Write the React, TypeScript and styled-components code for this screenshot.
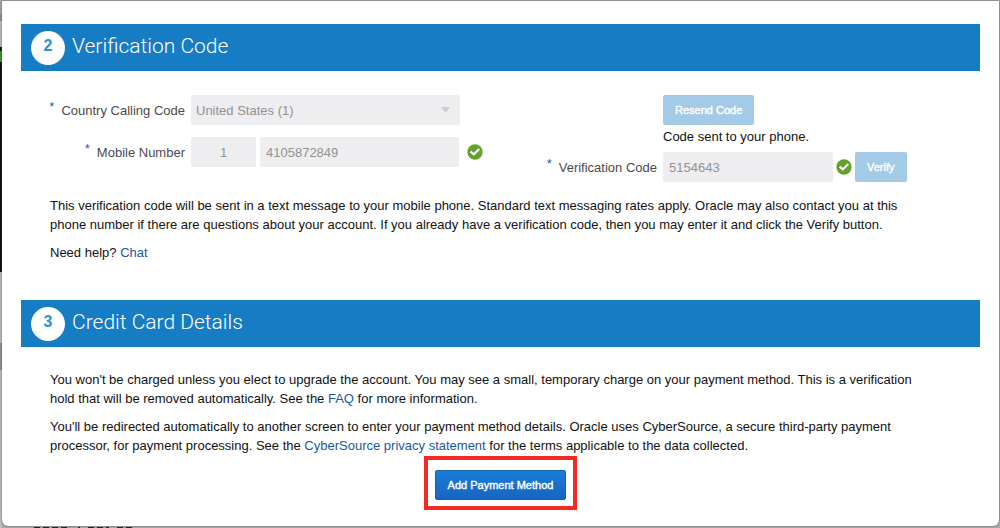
import React from "react";
import styled, { createGlobalStyle } from "styled-components";

const Global = createGlobalStyle`
  * { box-sizing: border-box; }
  body {
    margin: 0;
    background: #bdbdbd;
    font-family: "Liberation Sans", Arial, sans-serif;
    font-size: 13px;
    line-height: 19px;
    color: #111;
  }
  button, input, select { font: inherit; margin: 0; }
`;

const Backdrop = styled.div`
  min-height: 100vh;
  display: flex;
  flex-direction: column;
  padding: 1px 1px 0 2px;
  background: #a9a9a9 0 0 / 2px 100% no-repeat
    linear-gradient(
      to bottom,
      #a3a3a3 0 14px,
      #8e8e8e 14px 21px,
      #bcbcbc 21px 47px,
      #111 47px 51px,
      #2c9a1f 51px 62px,
      #0c0c0c 62px 272px,
      #bdbdbd 272px 343px,
      #8d8d8d 343px 370px,
      #bdbdbd 370px
    );
`;

const Dialog = styled.main`
  padding: 23px 19px 16px;
  background: #fff;
  border-radius: 0 0 6px 6px;
  box-shadow: 0 0 2px #444;
`;

const Behind = styled.div`
  height: 2px;
  padding: 1px 0 0 32px;
  display: flex;
  gap: 8px;
`;

const Fragment = styled.span<{ $width: number }>`
  width: ${(p) => p.$width}px;
  height: 1px;
  background: repeating-linear-gradient(to right, #222 0 6px, #999 6px 9px);
`;

const Banner = styled.header`
  display: flex;
  align-items: center;
  gap: 7px;
  height: 47px;
  padding-left: 10px;
  background: #167cc4;
`;

const Step = styled.span`
  display: flex;
  align-items: center;
  justify-content: center;
  width: 34px;
  height: 34px;
  padding-bottom: 4px;
  border-radius: 50%;
  background: #fff;
  color: #2493cf;
  font-size: 16px;
  font-weight: 700;
`;

const Title = styled.h2`
  margin: 0;
  padding-bottom: 4px;
  color: #fff;
  font-family: Roboto, "Liberation Sans", sans-serif;
  font-size: 21px;
  font-weight: 300;
  line-height: 28px;
`;

const Form = styled.form`
  display: flex;
  padding: 24px 0 0 19px;
`;

const Fields = styled.div<{ $label: number }>`
  display: grid;
  grid-template-columns: ${(p) => p.$label}px auto;
  column-gap: 6px;
  align-content: start;
`;

const PhoneFields = styled(Fields)`
  row-gap: 12px;
  width: 482px;
`;

const Label = styled.label`
  justify-self: end;
  align-self: center;
  color: #4a4a4a;
`;

const Required = styled.span`
  margin-right: 7px;
  color: #1c5fb0;
  line-height: 0;
  vertical-align: 4px;
`;

const Controls = styled.div<{ $gap: number }>`
  display: flex;
  align-items: center;
  gap: ${(p) => p.$gap}px;
`;

const Input = styled.input<{ $width: number; $center?: boolean }>`
  width: ${(p) => p.$width}px;
  height: 30px;
  padding: 0 6px;
  border: 0;
  border-radius: 2px;
  background: #eeeef0;
  color: #929292;
  text-align: ${(p) => (p.$center ? "center" : "left")};
`;

const SelectWrap = styled.div`
  display: grid;
  width: 269px;
  > * { grid-area: 1 / 1; }
  > svg { justify-self: end; align-self: center; margin-right: 10px; }
`;

const Select = styled.select`
  appearance: none;
  height: 30px;
  padding: 0 5px;
  border: 0;
  border-radius: 2px;
  background: #eeeef0;
  color: #929292;
  opacity: 1;
`;

const Button = styled.button<{ $primary?: boolean }>`
  height: 30px;
  padding: 0 12px;
  border: ${(p) => (p.$primary ? "1px solid #1560ad" : "0")};
  border-radius: 2px;
  background: ${(p) => (p.$primary ? "linear-gradient(#1a7bdb, #1666c0)" : "#a3cae6")};
  color: #fff;
  font-size: 11px;
  -webkit-text-stroke: 0.4px #fff;
`;

const Status = styled.p`
  grid-column: 2;
  margin: 0;
  padding: 2px 0 6px;
`;

const Copy = styled.div`
  display: flex;
  flex-direction: column;
  gap: 9px;
  max-width: 902px;
  padding: 14px 0 38px 29px;
  p { margin: 0; }
`;

const CardCopy = styled(Copy)`
  padding: 23px 0 1px 29px;
`;

const Link = styled.a`
  color: #1a56a5;
  text-decoration: none;
`;

const Highlight = styled.div`
  width: fit-content;
  margin: 0 auto;
  padding: 10px 7px 6px;
  border: 4px solid #f32a23;
  display: flex;
`;

const Resend = styled.div`
  grid-column: 2;
  display: flex;
`;

function Check() {
  return (
    <svg width="16" height="16" viewBox="0 0 16 16" role="img" aria-label="Valid">
      <circle cx="8" cy="8" r="7.7" fill="#65a22b" />
      <path d="M3.6 7.6 6.8 10.4 12.2 5" fill="none" stroke="#fff" strokeWidth="2.1" />
    </svg>
  );
}

function Section({ step, title, children }: { step: number; title: string; children: React.ReactNode }) {
  return (
    <section>
      <Banner>
        <Step>{step}</Step>
        <Title>{title}</Title>
      </Banner>
      {children}
    </section>
  );
}

export default function App() {
  return (
    <Backdrop>
      <Global />
      <Dialog>
        <Section step={2} title="Verification Code">
          <Form>
            <PhoneFields $label={145}>
              <Label htmlFor="country"><Required>*</Required>Country Calling Code</Label>
              <SelectWrap>
                <Select id="country" disabled><option>United States (1)</option></Select>
                <svg width="9" height="6" viewBox="0 0 9 6" aria-hidden="true"><path d="M0 0h9L4.5 6z" fill="#cfcfd1" /></svg>
              </SelectWrap>
              <Label htmlFor="mobile"><Required>*</Required>Mobile Number</Label>
              <Controls $gap={8}>
                <Controls $gap={4}>
                  <Input $width={65} $center aria-label="Calling code" defaultValue="1" disabled />
                  <Input $width={199} id="mobile" defaultValue="4105872849" disabled />
                </Controls>
                <Check />
              </Controls>
            </PhoneFields>
            <Fields $label={135}>
              <Resend><Button type="button" disabled>Resend Code</Button></Resend>
              <Status>Code sent to your phone.</Status>
              <Label htmlFor="code"><Required>*</Required>Verification Code</Label>
              <Controls $gap={3}>
                <Input $width={170} id="code" defaultValue="5154643" disabled />
                <Check />
                <Button type="button" disabled>Verify</Button>
              </Controls>
            </Fields>
          </Form>
          <Copy>
            <p>
              This verification code will be sent in a text message to your mobile phone. Standard text messaging rates apply. Oracle may also contact you at this
              phone number if there are questions about your account. If you already have a verification code, then you may enter it and click the Verify button.
            </p>
            <p>Need help? <Link href="#chat">Chat</Link></p>
          </Copy>
        </Section>
        <Section step={3} title="Credit Card Details">
          <CardCopy>
            <p>
              You won't be charged unless you elect to upgrade the account. You may see a small, temporary charge on your payment method. This is a verification
              hold that will be removed automatically. See the <Link href="#faq">FAQ</Link> for more information.
            </p>
            <p>
              You'll be redirected automatically to another screen to enter your payment method details. Oracle uses CyberSource, a secure third-party payment
              processor, for payment processing. See the <Link href="#privacy">CyberSource privacy statement</Link> for the terms applicable to the data collected.
            </p>
          </CardCopy>
          <Highlight><Button $primary type="button">Add Payment Method</Button></Highlight>
        </Section>
      </Dialog>
      <Behind aria-hidden="true">
        <Fragment $width={36} />
        <Fragment $width={2} />
        <Fragment $width={21} />
        <Fragment $width={15} />
      </Behind>
    </Backdrop>
  );
}
